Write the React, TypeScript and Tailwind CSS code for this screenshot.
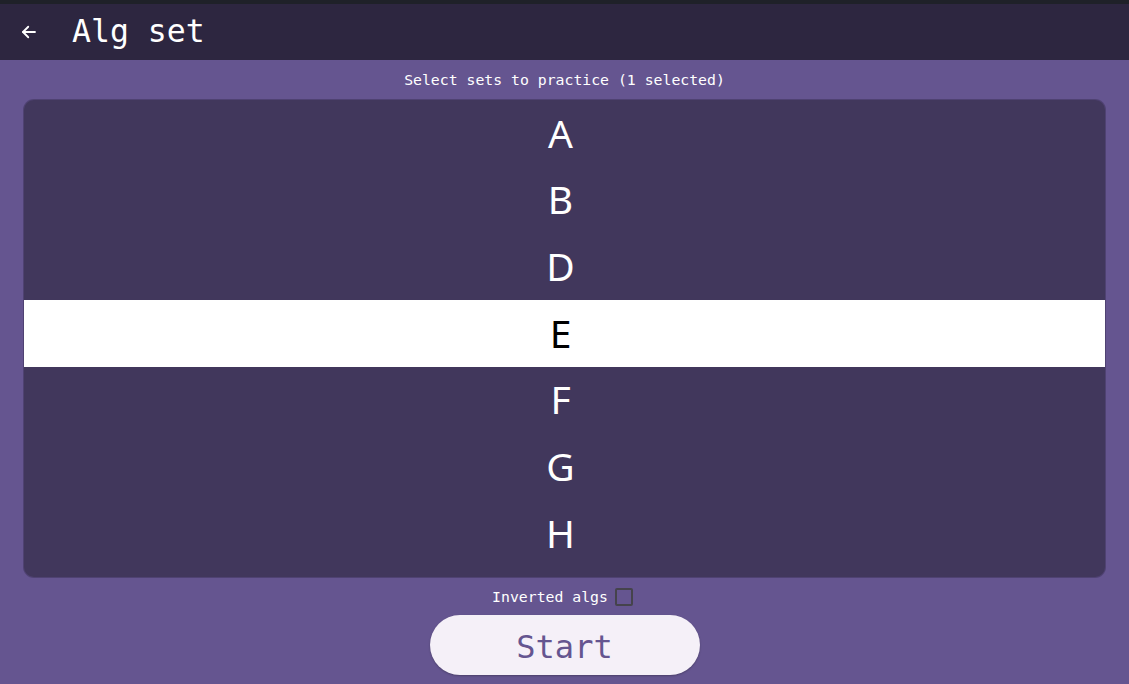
import React, { useState } from 'react';

const sets = ['A', 'B', 'D', 'E', 'F', 'G', 'H'];

const mono = { fontFamily: '"DejaVu Sans Mono", "Liberation Mono", monospace' };

const App: React.FC = () => {
  const [selected, setSelected] = useState<string[]>(['E']);
  const [inverted, setInverted] = useState(false);

  const toggle = (s: string) =>
    setSelected((prev) => (prev.includes(s) ? prev.filter((x) => x !== s) : [...prev, s]));

  return (
    <div className="w-[1129px] h-[684px] flex flex-col bg-[#655590] overflow-hidden" style={mono}>
      <div className="h-[4px] bg-[#1f2129]" />
      <header className="h-[56px] bg-[#2d2640] flex items-center text-white">
        <svg className="ml-[20px] w-[18px] h-[18px]" viewBox="0 0 24 24" fill="none" stroke="white" strokeWidth="2.4" strokeLinecap="round" strokeLinejoin="round">
          <path d="M20 12H4" />
          <path d="M11 5l-7 7 7 7" />
        </svg>
        <h1 className="ml-[34px] text-[31.5px] leading-none">Alg set</h1>
      </header>

      <p className="text-white text-[14.8px] text-center mt-[10px] leading-[20px]">
        Select sets to practice ({selected.length} selected)
      </p>

      <div className="mx-[24px] mt-[10px] h-[477px] rounded-[10px] bg-[#41375c] shadow-[0_0_0_1px_rgba(40,32,60,0.35)] overflow-hidden">
        {sets.map((s) => {
          const on = selected.includes(s);
          return (
            <button
              key={s}
              onClick={() => toggle(s)}
              className={`w-full h-[66.67px] flex items-center justify-center pr-[8px] pb-[2px] text-[39px] leading-none ${
                on ? 'bg-white text-black' : 'text-white'
              }`}
              style={{ fontFamily: '"Noto Sans", "DejaVu Sans", sans-serif' }}
            >
              {s}
            </button>
          );
        })}
      </div>

      <div className="mt-[10px] flex items-center justify-center gap-[7px] text-white text-[14.8px] leading-[20px] mr-[4px]">
        <span>Inverted algs</span>
        <span
          onClick={() => setInverted(!inverted)}
          className="w-[18px] h-[18px] rounded-[2px] border-2 border-[#45434c] inline-block"
        />
      </div>

      <div className="flex justify-center mt-[8px]">
        <button className="w-[270px] h-[60px] pt-[3px] rounded-full bg-[#f5f0f8] text-[#655590] text-[32px] font-medium leading-none shadow-[0_1px_2px_rgba(0,0,0,0.25)]">
          Start
        </button>
      </div>
    </div>
  );
};

export default App;
